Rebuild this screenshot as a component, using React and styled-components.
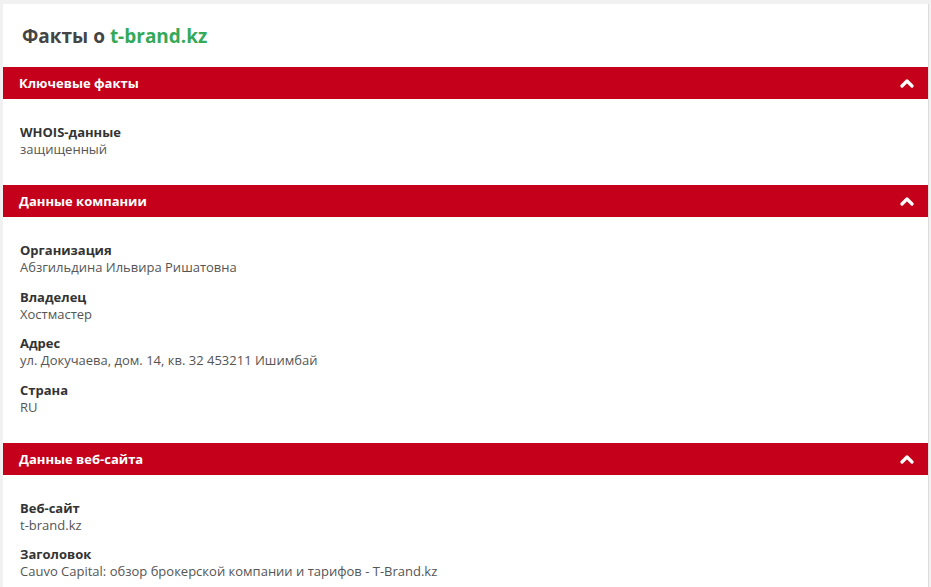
import styled, { createGlobalStyle } from "styled-components";

const GlobalStyle = createGlobalStyle`
    html, body {
        margin: 0;
        padding: 0;
        background: #f1f1f1;
    }
    body {
        font-family: "Open Sans", "Liberation Sans", Arial, sans-serif;
        font-size: 13px;
        color: #444;
    }
`;

const Page = styled.div`
    padding: 4px 2px 0 3px;
`;

const Card = styled.div`
    background: #fff;
    border-right: 1px solid #dcdcdc;
    min-height: 600px;
`;

const Heading = styled.h2`
    margin: 0;
    padding: 19px 17px 18px 19px;
    font-size: 19px;
    line-height: 26px;
    font-weight: 700;
    color: #444;

    span {
        color: #35a95a;
    }
`;

const Bar = styled.div`
    display: flex;
    align-items: center;
    justify-content: space-between;
    height: 32px;
    padding: 0 14px 0 16px;
    background: #c4001a;
    color: #fff;
    font-weight: 700;
    font-size: 13px;
`;

const Body = styled.div`
    display: flex;
    flex-direction: column;
    gap: 12.5px;
    padding: 25px 17px 27px;
`;

const Item = styled.div`
    display: flex;
    flex-direction: column;
    line-height: 17px;
`;

const Label = styled.div`
    font-weight: 700;
    color: #333;
`;

const Value = styled.div`
    color: #555;
`;

function Chevron() {
    return (
        <svg width='14' height='10' viewBox='0 0 14 10'>
            <polyline
                points='2,8 7,3 12,8'
                fill='none'
                stroke='#fff'
                strokeWidth='3.2'
                strokeLinecap='round'
                strokeLinejoin='round'
            />
        </svg>
    );
}

const sections = [
    {
        title: "Ключевые факты",
        items: [["WHOIS-данные", "защищенный"]],
    },
    {
        title: "Данные компании",
        items: [
            ["Организация", "Абзгильдина Ильвира Ришатовна"],
            ["Владелец", "Хостмастер"],
            ["Адрес", "ул. Докучаева, дом. 14, кв. 32 453211 Ишимбай"],
            ["Страна", "RU"],
        ],
    },
    {
        title: "Данные веб-сайта",
        items: [
            ["Веб-сайт", "t-brand.kz"],
            ["Заголовок", "Cauvo Capital: обзор брокерской компании и тарифов - T-Brand.kz"],
        ],
    },
];

export default function App() {
    return (
        <Page>
            <GlobalStyle />
            <Card>
                <Heading>
                    Факты о <span>t-brand.kz</span>
                </Heading>
                {sections.map((s) => (
                    <section key={s.title}>
                        <Bar>
                            {s.title}
                            <Chevron />
                        </Bar>
                        <Body>
                            {s.items.map(([label, value]) => (
                                <Item key={label}>
                                    <Label>{label}</Label>
                                    <Value>{value}</Value>
                                </Item>
                            ))}
                        </Body>
                    </section>
                ))}
            </Card>
        </Page>
    );
}
